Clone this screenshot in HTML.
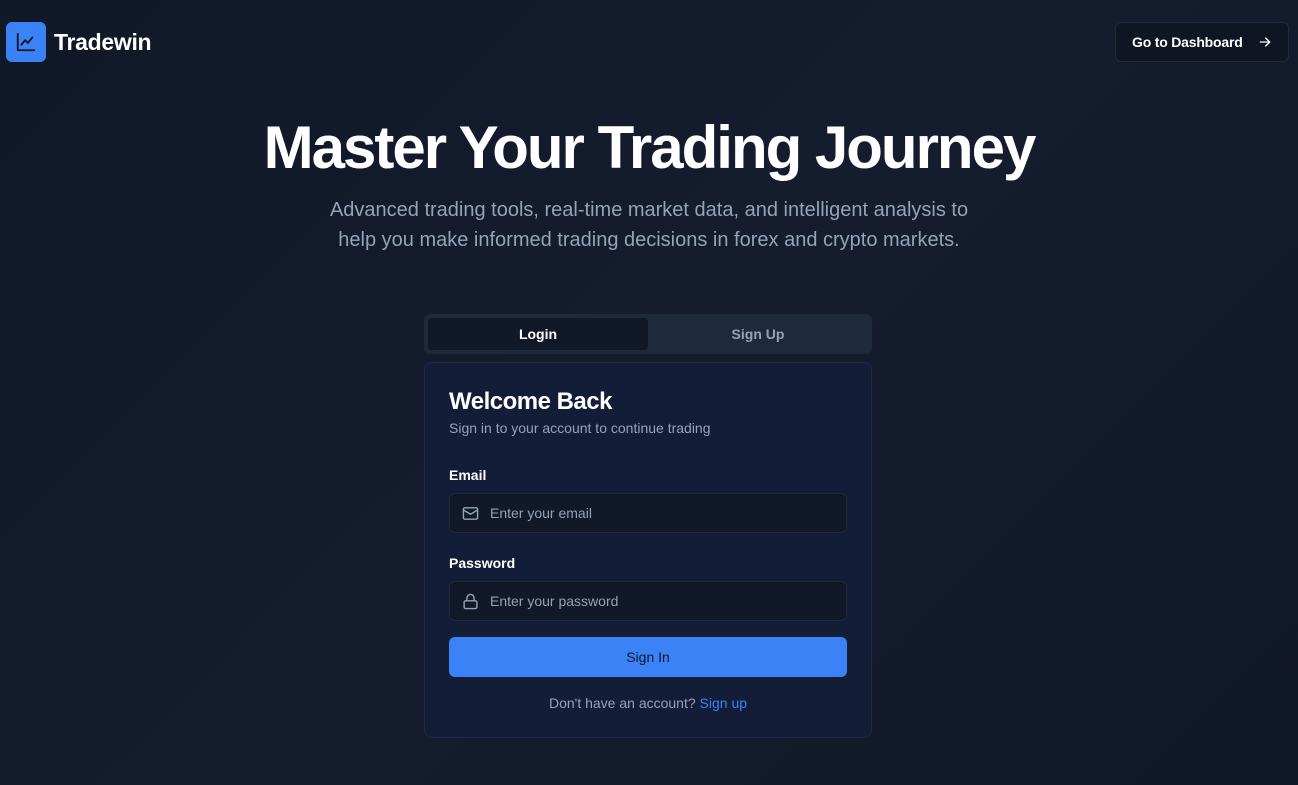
<!DOCTYPE html>
<html><head><meta charset="utf-8"><style>
*{box-sizing:border-box;margin:0;padding:0}
body{width:1298px;height:785px;overflow:hidden;font-family:"Liberation Sans",sans-serif;background:linear-gradient(135deg,#111827 0%,#141c2e 50%,#111827 100%);color:#fff;position:relative}
.logo{position:absolute;left:6px;top:22px;display:flex;align-items:center}
.lb{width:40px;height:40px;background:#3b82f6;border-radius:6px;display:flex;align-items:center;justify-content:center}
.lt{font-size:23px;font-weight:bold;margin-left:8px;letter-spacing:-0.3px}
.dash{position:absolute;left:1115px;top:22px;width:174px;height:40px;border:1px solid #1f2937;border-radius:6px;background:#0f1522;display:flex;align-items:center;padding-left:16px;font-size:14px;font-weight:bold;letter-spacing:-0.2px}
.dash svg{margin-left:14px}
h1{position:absolute;top:113px;left:0;width:1298px;text-align:center;font-size:60px;font-weight:bold;letter-spacing:-2px}
.sub{position:absolute;top:195px;left:0;width:1298px;text-align:center;font-size:20px;line-height:30px;color:#94a3b8}
.tabs{position:absolute;left:424px;top:314px;width:448px;height:40px;background:#1e293b;border-radius:6px;padding:4px}
.tab{position:absolute;top:4px;height:32px;width:220px;display:flex;align-items:center;justify-content:center;font-size:14px;font-weight:bold;border-radius:4px}
.t1{left:4px;background:#111827;color:#fff}.t2{left:224px;color:#94a3b8}
.card{position:absolute;left:424px;top:362px;width:448px;height:376px;background:#131d37;border:1px solid #1f2a44;border-radius:8px}
.card h2{position:absolute;left:24px;top:25px;font-size:24px;font-weight:bold;letter-spacing:-0.5px}
.cs{position:absolute;left:24px;top:57px;font-size:14px;color:#94a3b8}
.lab{position:absolute;left:24px;font-size:14px;font-weight:bold}
.inp{position:absolute;left:24px;width:398px;height:40px;background:#111827;border:1px solid #1f2937;border-radius:6px;display:flex;align-items:center;padding-left:12px;font-size:14px;color:#94a3b8}
.inp svg{margin-right:11px}
.btn{position:absolute;left:24px;top:274px;width:398px;height:40px;background:#3b82f6;border-radius:6px;display:flex;align-items:center;justify-content:center;font-size:14px;color:#111827;font-weight:500}
.foot{position:absolute;left:0;width:446px;top:332px;text-align:center;font-size:14px;color:#94a3b8}
.foot span{color:#3b82f6}
</style></head><body>
<div class="logo"><div class="lb"><svg width="22" height="22" viewBox="0 0 24 24" fill="none" stroke="#111827" stroke-width="2" stroke-linecap="round" stroke-linejoin="round"><path d="M3 3v18h18"/><path d="M7 15l4-5 3 3 5-6"/></svg></div><div class="lt">Tradewin</div></div>
<div class="dash">Go to Dashboard<svg width="16" height="16" viewBox="0 0 24 24" fill="none" stroke="#fff" stroke-width="2" stroke-linecap="round" stroke-linejoin="round"><path d="M5 12h14M13 6l6 6-6 6"/></svg></div>
<h1>Master Your Trading Journey</h1>
<div class="sub">Advanced trading tools, real-time market data, and intelligent analysis to<br>help you make informed trading decisions in forex and crypto markets.</div>
<div class="tabs"><div class="tab t1">Login</div><div class="tab t2">Sign Up</div></div>
<div class="card">
<h2>Welcome Back</h2>
<div class="cs">Sign in to your account to continue trading</div>
<div class="lab" style="top:104px">Email</div>
<div class="inp" style="top:130px"><svg width="17" height="17" viewBox="0 0 24 24" fill="none" stroke="#94a3b8" stroke-width="2" stroke-linecap="round" stroke-linejoin="round"><rect x="2" y="4" width="20" height="16" rx="2"/><path d="M22 7l-10 6L2 7"/></svg>Enter your email</div>
<div class="lab" style="top:192px">Password</div>
<div class="inp" style="top:218px"><svg width="17" height="17" viewBox="0 0 24 24" fill="none" stroke="#94a3b8" stroke-width="2" stroke-linecap="round" stroke-linejoin="round"><rect x="3" y="11" width="18" height="11" rx="2"/><path d="M7 11V7a5 5 0 0110 0v4"/></svg>Enter your password</div>
<div class="btn">Sign In</div>
<div class="foot">Don't have an account? <span>Sign up</span></div>
</div>
</body></html>
